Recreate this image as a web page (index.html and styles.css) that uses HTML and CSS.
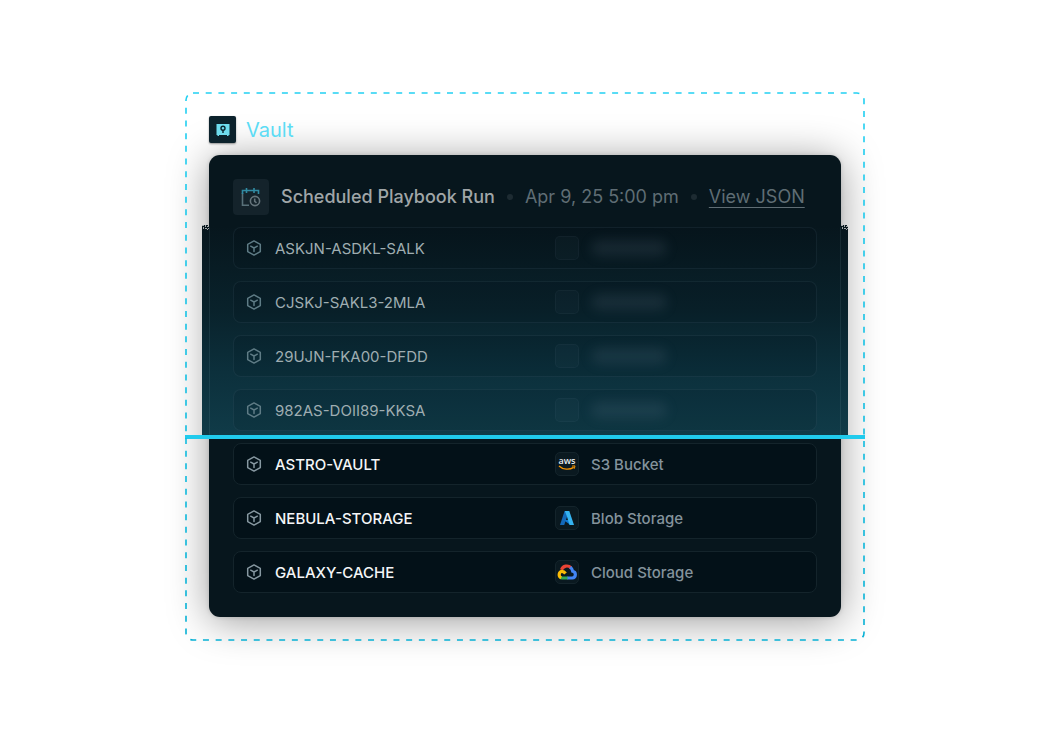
FILE: index.html
```html
<!DOCTYPE html>
<html lang="en">
<head>
<meta charset="utf-8">
<title>Vault</title>
<link rel="stylesheet" href="styles.css">
</head>
<body>
<svg class="defs" aria-hidden="true">
  <symbol id="cube" viewBox="0 0 16 16">
    <path d="M8 0.900 14.300 4.400V11.600L8 15.100 1.700 11.600V4.400ZM4.700 6.200 8 8 11.300 6.200M8 8V11.600" fill="none" stroke="currentColor" stroke-width="1.500" stroke-linejoin="round" stroke-linecap="round"/>
  </symbol>
  <symbol id="speckle" viewBox="0 0 7 5">
    <path d="M0 0h2v1h-2zM3 0h1v2h-1zM5 1h2v1h-2zM1 2h1v2h-1zM3 3h2v1h-2zM6 3h1v1h-1zM5 4h1v1h-1z" fill="#a4a9ab"/>
    <path d="M2 0h1v1h-1zM4 0h2v1h-2zM0 1h3v1h-3z" fill="#07161d"/>
  </symbol>
</svg>
<main class="frame">
  <svg class="outline" aria-hidden="true">
    <defs>
      <linearGradient id="edge" x1="0" y1="0" x2="0" y2="1"><stop offset="0" stop-color="#22d0f2"/><stop offset="1" stop-color="#06b0d4"/></linearGradient>
    </defs>
    <rect class="dashes" rx="7"/>
  </svg>
  <h1 class="label">
    <span class="badge">
      <svg width="14" height="14" viewBox="0 0 14 14" aria-hidden="true">
        <path d="M0.500 1H13.500V12H12.500V13H11V12H3V13H1.500V12H0.500Z" fill="#6edcee"/>
        <circle cx="7" cy="5.300" r="2" fill="none" stroke="#0b2630" stroke-width="1.400"/>
        <path d="M7 7.300V10" stroke="#0b2630" stroke-width="1.400"/>
      </svg>
    </span>
    <span class="label-text">Vault</span>
  </h1>
  <section class="card">
    <header class="head">
      <span class="tile">
        <svg width="20" height="20" viewBox="0 0 20 20" fill="none" stroke-width="1.600" aria-hidden="true">
          <path d="M1.500 6V18.200H8" stroke="#587079"/>
          <path d="M1.500 7V3.500H17.500V7M5.500 1V6M13 1V6" stroke="#318ba3"/>
          <circle cx="14" cy="14" r="4.600" stroke="#66757c"/>
          <path d="M13.700 11.500V14.300L15.500 15.800" stroke="#66757c"/>
        </svg>
      </span>
      <h2 class="title">Scheduled Playbook Run</h2>
      <span class="dot"></span>
      <time class="meta">Apr 9, 25 5:00 pm</time>
      <span class="dot"></span>
      <a class="meta link" href="#">View JSON</a>
    </header>
    <div class="scanned">
      <ul class="rows">
        <li class="row"><svg class="cube"><use href="#cube"/></svg><span class="name">ASKJN-ASDKL-SALK</span><span class="chip"></span><span class="smudge"></span></li>
        <li class="row"><svg class="cube"><use href="#cube"/></svg><span class="name">CJSKJ-SAKL3-2MLA</span><span class="chip"></span><span class="smudge"></span></li>
        <li class="row"><svg class="cube"><use href="#cube"/></svg><span class="name">29UJN-FKA00-DFDD</span><span class="chip"></span><span class="smudge"></span></li>
        <li class="row"><svg class="cube"><use href="#cube"/></svg><span class="name">982AS-DOII89-KKSA</span><span class="chip"></span><span class="smudge"></span></li>
      </ul>
      <svg class="speckle left"><use href="#speckle"/></svg>
      <svg class="speckle right"><use href="#speckle"/></svg>
      <div class="beam"></div>
    </div>
    <ul class="rows">
      <li class="row"><svg class="cube"><use href="#cube"/></svg><span class="name">ASTRO-VAULT</span>
        <span class="chip"><svg width="20" height="20" viewBox="0 0 20 20" aria-hidden="true">
          <text class="aws" x="10" y="10" text-anchor="middle">aws</text>
          <path d="M2 12C6 15.900 12.500 16.100 16.700 13.400" fill="none" stroke="#f79400" stroke-width="1.300"/>
          <path d="M15 12.100 18 11.900 17.300 14.700" fill="none" stroke="#f79400" stroke-width="1"/>
        </svg></span><span class="kind">S3 Bucket</span></li>
      <li class="row"><svg class="cube"><use href="#cube"/></svg><span class="name">NEBULA-STORAGE</span>
        <span class="chip"><svg width="16" height="16" viewBox="0 0 16 16" aria-hidden="true">
          <path d="M5.600 1H10L5.200 15H1Z" fill="#1368b8"/>
          <path d="M6.500 10H12V15H11.500L5.500 10.800Z" fill="#0d75d2"/>
          <path d="M5.800 1H10.300L15 15H10.500L7.800 6Z" fill="#35b3f0"/>
        </svg></span><span class="kind">Blob Storage</span></li>
      <li class="row"><svg class="cube"><use href="#cube"/></svg><span class="name">GALAXY-CACHE</span>
        <span class="chip"><svg width="20" height="16" viewBox="0 0 20 16" fill="none" stroke-width="3.200" aria-hidden="true">
          <path d="M4.500 5.800A5.700 5.700 0 0 1 14 3.800" stroke="#ea4335"/>
          <path d="M13.200 3.200A6 6 0 0 1 15.700 7.300 3.400 3.400 0 0 1 15.200 14H10" stroke="#4285f4"/>
          <path d="M10.500 14H5A3.300 3.300 0 0 1 3.200 13.300" stroke="#34a853"/>
          <path d="M4.200 13.900A3.500 3.500 0 0 1 5 7.300Q7 7.300 8.500 9.500" stroke="#fbbc05"/>
        </svg></span><span class="kind">Cloud Storage</span></li>
    </ul>
  </section>
</main>
</body>
</html>
```

FILE: styles.css
```css
* { box-sizing: border-box; }

body {
  margin: 0;
  min-height: 100vh;
  display: flex;
  align-items: center;
  justify-content: center;
  background: #fff;
  font-family: Inter, "Liberation Sans", sans-serif;
}

ul, h1, h2 { margin: 0; padding: 0; list-style: none; font-weight: 400; }

.defs { position: absolute; width: 0; height: 0; }

.frame {
  position: relative;
  width: 100%;
  max-width: 680px;
  padding: 24px;
  border-radius: 8px;
}

.outline {
  position: absolute;
  inset: 0;
  z-index: 1;
  width: 100%;
  height: 100%;
  pointer-events: none;
}

.dashes {
  x: 1px;
  y: 1px;
  width: calc(100% - 2px);
  height: calc(100% - 2px);
  fill: none;
  stroke: url(#edge);
  stroke-width: 1.6;
  stroke-dasharray: 6 6.7;
}

.label {
  position: relative;
  z-index: 1;
  display: flex;
  align-items: center;
  gap: 10px;
  margin-bottom: 12px;
  font-size: 20px;
  line-height: 25px;
  color: #5cdcf5;
}

.label-text { padding-top: 2px; }

.badge {
  display: flex;
  align-items: center;
  justify-content: center;
  width: 27px;
  height: 27px;
  border-radius: 2px;
  background: #0c222c;
  box-shadow: 0 1px 2px rgba(0, 0, 0, .4);
}

.card {
  position: relative;
  display: grid;
  gap: 12px;
  padding: 24px;
  border-radius: 11px;
  background: #07161d;
  box-shadow: 0 0 4px rgba(0, 0, 0, .15), 0 4px 40px rgba(0, 0, 0, .4);
}

.head {
  display: flex;
  align-items: center;
  gap: 12px;
  font-size: 18px;
  line-height: 24px;
}

.tile {
  display: flex;
  align-items: center;
  justify-content: center;
  width: 36px;
  height: 36px;
  border-radius: 4px;
  background: #14232b;
}

.title { font-size: 18px; font-weight: 500; color: #a0a6a8; }
.meta { color: #5f6d74; }
.link { text-decoration: underline; text-decoration-thickness: 1px; text-underline-offset: 4px; }
.dot { width: 6px; height: 6px; border-radius: 50%; background: #1d2b32; }

.rows { display: grid; gap: 12px; }

.row {
  display: grid;
  grid-template-columns: 17px 268px 24px 1fr;
  align-items: center;
  column-gap: 12px;
  height: 42px;
  padding: 0 12px;
  border: 1px solid #14242b;
  border-radius: 8px;
  background: #031118;
}

.cube { width: 16px; height: 16px; color: #8798a1; }
.name, .kind { padding-top: 2px; font-size: 15px; line-height: 20px; font-weight: 500; }
.name { color: #f4f6f7; }
.kind { color: #84939c; }

.chip {
  display: flex;
  align-items: center;
  justify-content: center;
  width: 24px;
  height: 24px;
  border: 1px solid #14242b;
  border-radius: 5px;
  background: #0a1920;
}

.aws { font: 600 9px "Open Sans", sans-serif; fill: #e8edef; }

.scanned { position: relative; isolation: isolate; }

.scanned::before {
  content: "";
  position: absolute;
  z-index: -1;
  inset: -1px -31px -4px;
  background: linear-gradient(#07161d, #09222b 40%, #0c303c 70%, #103b48);
}

.scanned::after {
  content: "";
  position: absolute;
  z-index: -1;
  inset: 0 -24px -4px;
  border: solid rgba(160, 200, 210, .1);
  border-width: 0 1px;
}

.scanned .row { background: rgba(0, 10, 16, .1); border-color: rgba(120, 160, 175, .1); }
.scanned .name { font-weight: 400; color: #9fadb1; }
.scanned .cube { color: #5f7c86; }
.scanned .chip { background: rgba(130, 160, 175, .04); border-color: rgba(130, 160, 175, .06); }

.smudge {
  width: 76px;
  height: 16px;
  border-radius: 8px;
  background: rgba(120, 145, 160, .14);
  filter: blur(6px);
}

.speckle { position: absolute; top: -2px; width: 7px; height: 5px; }
.left { left: -31px; }
.right { right: -31px; }

.beam {
  position: absolute;
  left: -48px;
  right: -48px;
  bottom: -8px;
  height: 4px;
  background: #20cbed;
}
```
